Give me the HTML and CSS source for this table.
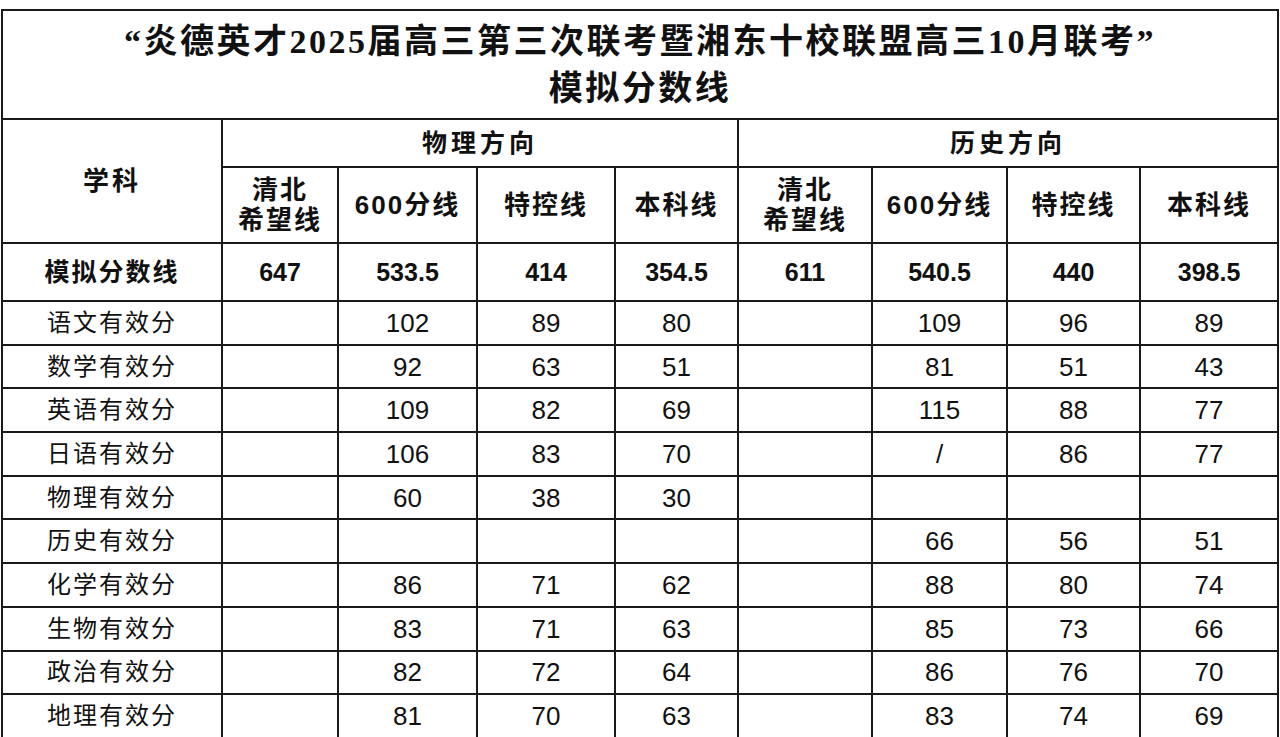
FILE: index.html
```html
<!DOCTYPE html>
<html lang="zh-CN">
<head>
<meta charset="utf-8">
<title>模拟分数线</title>
<link rel="stylesheet" href="styles.css">
</head>
<body>
<div class="sheet">
  <table class="score">
    <colgroup>
      <col class="c-subject">
      <col class="c-qb">
      <col class="c-600">
      <col class="c-tk">
      <col class="c-bk">
      <col class="c-qb2">
      <col class="c-600b">
      <col class="c-tk2">
      <col class="c-bk2">
    </colgroup>
    <tr class="r-title">
      <th colspan="9" class="title">
        <div class="title-line">“炎德英才2025届高三第三次联考暨湘东十校联盟高三10月联考”</div>
        <div class="title-line">模拟分数线</div>
      </th>
    </tr>
    <tr class="r-h1">
      <th rowspan="2" class="h-subject">学科</th>
      <th colspan="4" class="h-dir">物理方向</th>
      <th colspan="4" class="h-dir">历史方向</th>
    </tr>
    <tr class="r-h2">
      <th class="h-sub h-two">清北<br>希望线</th>
      <th class="h-sub">600分线</th>
      <th class="h-sub">特控线</th>
      <th class="h-sub">本科线</th>
      <th class="h-sub h-two">清北<br>希望线</th>
      <th class="h-sub">600分线</th>
      <th class="h-sub">特控线</th>
      <th class="h-sub">本科线</th>
    </tr>
    <tr class="r-line">
      <th class="lbl-bold">模拟分数线</th>
      <td>647</td><td>533.5</td><td>414</td><td>354.5</td>
      <td>611</td><td>540.5</td><td>440</td><td>398.5</td>
    </tr>
    <tr class="r-data">
      <td class="lbl">语文有效分</td>
      <td></td><td>102</td><td>89</td><td>80</td>
      <td></td><td>109</td><td>96</td><td>89</td>
    </tr>
    <tr class="r-data">
      <td class="lbl">数学有效分</td>
      <td></td><td>92</td><td>63</td><td>51</td>
      <td></td><td>81</td><td>51</td><td>43</td>
    </tr>
    <tr class="r-data">
      <td class="lbl">英语有效分</td>
      <td></td><td>109</td><td>82</td><td>69</td>
      <td></td><td>115</td><td>88</td><td>77</td>
    </tr>
    <tr class="r-data">
      <td class="lbl">日语有效分</td>
      <td></td><td>106</td><td>83</td><td>70</td>
      <td></td><td>/</td><td>86</td><td>77</td>
    </tr>
    <tr class="r-data">
      <td class="lbl">物理有效分</td>
      <td></td><td>60</td><td>38</td><td>30</td>
      <td></td><td></td><td></td><td></td>
    </tr>
    <tr class="r-data">
      <td class="lbl">历史有效分</td>
      <td></td><td></td><td></td><td></td>
      <td></td><td>66</td><td>56</td><td>51</td>
    </tr>
    <tr class="r-data">
      <td class="lbl">化学有效分</td>
      <td></td><td>86</td><td>71</td><td>62</td>
      <td></td><td>88</td><td>80</td><td>74</td>
    </tr>
    <tr class="r-data">
      <td class="lbl">生物有效分</td>
      <td></td><td>83</td><td>71</td><td>63</td>
      <td></td><td>85</td><td>73</td><td>66</td>
    </tr>
    <tr class="r-data">
      <td class="lbl">政治有效分</td>
      <td></td><td>82</td><td>72</td><td>64</td>
      <td></td><td>86</td><td>76</td><td>70</td>
    </tr>
    <tr class="r-data">
      <td class="lbl">地理有效分</td>
      <td></td><td>81</td><td>70</td><td>63</td>
      <td></td><td>83</td><td>74</td><td>69</td>
    </tr>
  </table>
</div>
</body>
</html>
```

FILE: styles.css
```css
html, body {
  margin: 0;
  padding: 0;
  background: #ffffff;
}

body {
  font-family: "Liberation Sans", "Noto Sans CJK SC", sans-serif;
  color: #111111;
}

.sheet {
  padding: 9px 0 0 1px;
  width: 1279px;
}

.score {
  border-collapse: collapse;
  table-layout: fixed;
  width: 1276px;
  border: 2px solid #1a1a1a;
}

.score th,
.score td {
  border: 2px solid #1a1a1a;
  padding: 0;
  text-align: center;
  vertical-align: middle;
  overflow: hidden;
  white-space: nowrap;
}

.c-subject { width: 220px; }
.c-qb { width: 116px; }
.c-600 { width: 139px; }
.c-tk { width: 138px; }
.c-bk { width: 123px; }
.c-qb2 { width: 134px; }
.c-600b { width: 135px; }
.c-tk2 { width: 133px; }
.c-bk2 { width: 138px; }

.r-title { height: 109px; }
.r-h1 { height: 48px; }
.r-h2 { height: 76px; }
.r-line { height: 58px; }
.r-data { height: 43.7px; }

.title {
  font-family: "Liberation Serif", "Noto Sans CJK SC", serif;
  font-weight: 700;
  font-size: 34px;
  letter-spacing: 2.5px;
  line-height: 47px;
  padding-top: 10px;
}

.h-subject,
.h-sub,
.lbl-bold {
  font-weight: 700;
}

.h-dir {
  font-weight: 700;
  font-size: 25px;
  letter-spacing: 4px;
  line-height: 30px;
}

.h-subject {
  font-size: 26px;
  letter-spacing: 3px;
  line-height: 30px;
  padding-top: 8px;
}

.h-sub {
  font-size: 26px;
  letter-spacing: 2px;
  line-height: 30px;
}

.h-two {
  line-height: 30px;
}

.lbl-bold {
  font-size: 25px;
  letter-spacing: 2px;
  line-height: 30px;
}

.r-line td {
  font-weight: 700;
  font-size: 25px;
  line-height: 30px;
}

.r-data td {
  font-size: 26px;
  line-height: 30px;
}

.r-data .lbl {
  font-size: 24px;
  letter-spacing: 2px;
}
```
